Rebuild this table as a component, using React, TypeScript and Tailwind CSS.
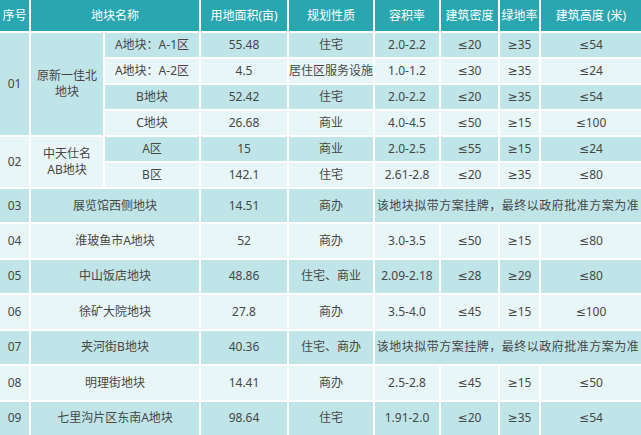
import type { ReactNode } from "react";

// Land parcel listing — teal header, alternating light/medium teal rows, white 2px rules between cells.
const MID = "bg-[#bfe5e9]";
const LIGHT = "bg-[#e8f6f8]";

type Tone = "mid" | "light";

function Cell({
  tone,
  className = "",
  children,
}: {
  tone: Tone;
  className?: string;
  children: ReactNode;
}) {
  return (
    <div
      className={`flex items-center justify-center whitespace-nowrap text-center leading-[1.35] ${
        tone === "mid" ? MID : LIGHT
      } ${className}`}
    >
      {children}
    </div>
  );
}

function Head({ className = "", children }: { className?: string; children: ReactNode }) {
  return (
    <div className={`flex items-center justify-center whitespace-nowrap bg-[#29a6b0] text-white ${className}`}>
      {children}
    </div>
  );
}

// the trailing columns of a row, one cell per value
function SubRow({ tone, cells }: { tone: Tone; cells: string[] }) {
  return (
    <>
      {cells.map((c, i) => (
        <Cell key={i} tone={tone}>
          {c}
        </Cell>
      ))}
    </>
  );
}

const singles: { no: string; name: string; area: string; use: string; rest: string[] | null; tone: Tone }[] = [
  { no: "03", name: "展览馆西侧地块", area: "14.51", use: "商办", rest: null, tone: "mid" },
  { no: "04", name: "淮玻鱼市A地块", area: "52", use: "商办", rest: ["3.0-3.5", "≤50", "≥15", "≤80"], tone: "light" },
  { no: "05", name: "中山饭店地块", area: "48.86", use: "住宅、商业", rest: ["2.09-2.18", "≤28", "≥29", "≤80"], tone: "mid" },
  { no: "06", name: "徐矿大院地块", area: "27.8", use: "商办", rest: ["3.5-4.0", "≤45", "≥15", "≤100"], tone: "light" },
  { no: "07", name: "夹河街B地块", area: "40.36", use: "住宅、商办", rest: null, tone: "mid" },
  { no: "08", name: "明理街地块", area: "14.41", use: "商办", rest: ["2.5-2.8", "≤45", "≥15", "≤50"], tone: "light" },
  { no: "09", name: "七里沟片区东南A地块", area: "98.64", use: "住宅", rest: ["1.91-2.0", "≤20", "≥35", "≤54"], tone: "mid" },
];

export default function App() {
  return (
    <div
      className="h-[435px] w-[641px] bg-white text-[12px] text-[#474747]"
      style={{ fontFamily: '"Noto Sans", "DejaVu Sans", "Noto Sans CJK SC", sans-serif' }}
    >
      <div className="grid h-full grid-cols-[29px_72px_94px_86px_84px_64px_57px_39px_1fr] grid-rows-[31px_repeat(6,24px)_repeat(7,1fr)] gap-[2px]">
        <Head>序号</Head>
        <Head className="col-span-2">地块名称</Head>
        <Head>用地面积(亩)</Head>
        <Head>规划性质</Head>
        <Head>容积率</Head>
        <Head>建筑密度</Head>
        <Head>绿地率</Head>
        <Head>建筑高度 (米)</Head>

        <Cell tone="mid" className="row-span-4">01</Cell>
        <Cell tone="mid" className="row-span-4 whitespace-normal">
          原新一佳北
          <br />
          地块
        </Cell>
        <SubRow tone="mid" cells={["A地块：A-1区", "55.48", "住宅", "2.0-2.2", "≤20", "≥35", "≤54"]} />
        <SubRow tone="light" cells={["A地块：A-2区", "4.5", "居住区服务设施", "1.0-1.2", "≤30", "≥35", "≤24"]} />
        <SubRow tone="mid" cells={["B地块", "52.42", "住宅", "2.0-2.2", "≤20", "≥35", "≤54"]} />
        <SubRow tone="light" cells={["C地块", "26.68", "商业", "4.0-4.5", "≤50", "≥15", "≤100"]} />

        <Cell tone="light" className="row-span-2">02</Cell>
        <Cell tone="light" className="row-span-2 whitespace-normal">
          中天仕名
          <br />
          AB地块
        </Cell>
        <SubRow tone="mid" cells={["A区", "15", "商业", "2.0-2.5", "≤55", "≥15", "≤24"]} />
        <SubRow tone="light" cells={["B区", "142.1", "住宅", "2.61-2.8", "≤20", "≥35", "≤80"]} />

        {singles.map((r) => (
          <SingleRow key={r.no} {...r} />
        ))}
      </div>
    </div>
  );
}

function SingleRow({
  no,
  name,
  area,
  use,
  rest,
  tone,
}: {
  no: string;
  name: string;
  area: string;
  use: string;
  rest: string[] | null;
  tone: Tone;
}) {
  return (
    <>
      <Cell tone={tone}>{no}</Cell>
      <Cell tone={tone} className="col-span-2">
        {name}
      </Cell>
      <Cell tone={tone}>{area}</Cell>
      <Cell tone={tone}>{use}</Cell>
      {rest ? (
        <SubRow tone={tone} cells={rest} />
      ) : (
        // listed with a design scheme — no fixed indicators yet
        <Cell tone={tone} className="col-span-4 tracking-[0.5px]">
          该地块拟带方案挂牌，最终以政府批准方案为准
        </Cell>
      )}
    </>
  );
}
